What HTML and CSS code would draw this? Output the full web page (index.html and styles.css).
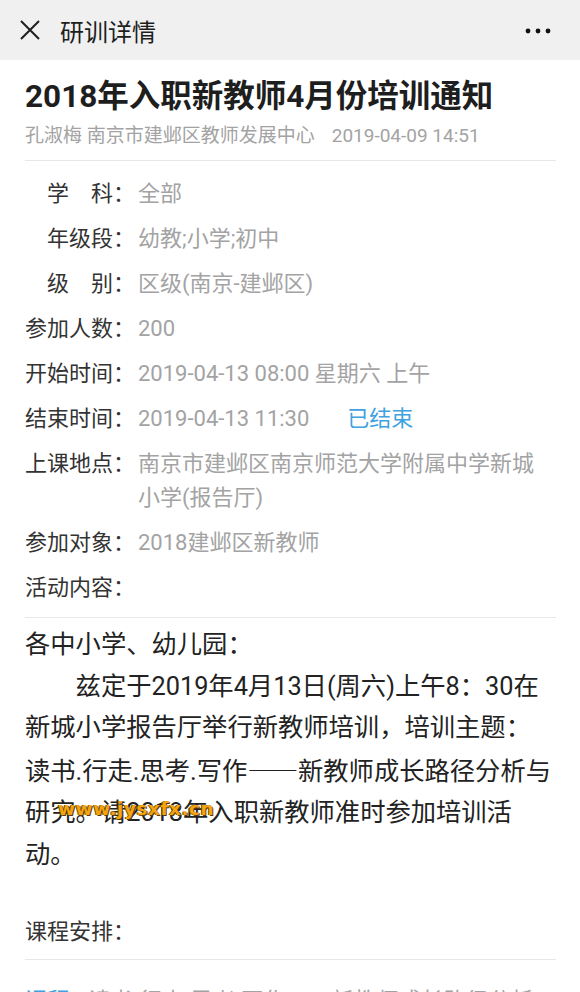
FILE: index.html
```html
<!DOCTYPE html>
<html lang="zh-CN">
<head>
    <meta charset="UTF-8">
    <meta name="viewport" content="width=device-width, initial-scale=1.0">
    <title>研训详情</title>
    <link rel="stylesheet" href="styles.css">
</head>
<body>
    <div class="topbar">
        <svg class="close-icon" width="20" height="20" viewBox="0 0 20 20">
            <path d="M1 1 L19 19 M19 1 L1 19" stroke="#1e1e1e" stroke-width="2" fill="none"/>
        </svg>
        <span class="topbar-title">研训详情</span>
        <svg class="more-icon" width="30" height="8" viewBox="0 0 30 8">
            <circle cx="5" cy="4" r="2.4" fill="#111"/>
            <circle cx="15" cy="4" r="2.4" fill="#111"/>
            <circle cx="25" cy="4" r="2.4" fill="#111"/>
        </svg>
    </div>

    <div class="container">
        <div class="heading">
            <h1>2018年入职新教师4月份培训通知</h1>
            <p class="meta">孔淑梅 南京市建邺区教师发展中心<span class="meta-date">2019-04-09 14:51</span></p>
        </div>

        <div class="details">
            <div class="row"><span class="label">学　科：</span><span class="value">全部</span></div>
            <div class="row"><span class="label">年级段：</span><span class="value">幼教;小学;初中</span></div>
            <div class="row"><span class="label">级　别：</span><span class="value">区级(南京-建邺区)</span></div>
            <div class="row"><span class="label">参加人数：</span><span class="value">200</span></div>
            <div class="row"><span class="label">开始时间：</span><span class="value">2019-04-13 08:00 星期六 上午</span></div>
            <div class="row"><span class="label">结束时间：</span><span class="value">2019-04-13 11:30<span class="status">已结束</span></span></div>
            <div class="row"><span class="label">上课地点：</span><span class="value">南京市建邺区南京师范大学附属中学新城小学(报告厅)</span></div>
            <div class="row"><span class="label">参加对象：</span><span class="value">2018建邺区新教师</span></div>
            <div class="row"><span class="label">活动内容：</span></div>
        </div>

        <div class="content">
            <p>各中小学、幼儿园：</p>
            <p class="indent">兹定于2019年4月13日(周六)上午8：30在新城小学报告厅举行新教师培训，培训主题：读书.行走.思考.写作<span class="dash">——</span>新教师成长路径分析与研究。请2018年入职新教师准时参加培训活动。</p>
            <span class="watermark">www.jysxfx.cn</span>
        </div>

        <div class="schedule">
            <p class="schedule-title">课程安排：</p>
        </div>

        <div class="course">
            <span class="course-no">课程1</span> 读书.行走.思考.写作<span class="dash">——</span>新教师成长路径分析与研究
        </div>
    </div>
</body>
</html>
```

FILE: styles.css
```css
body {
    margin: 0;
    background: #fff;
    font-family: Roboto, "Noto Sans CJK SC", sans-serif;
    color: #222;
}

.topbar {
    height: 60px;
    background: #f0f0f0;
    display: flex;
    align-items: center;
    padding: 0 27px 0 20px;
}

.close-icon {
    flex: none;
}

.topbar-title {
    margin-left: 20px;
    font-size: 24px;
    color: #1e1e1e;
    flex: 1;
}

.more-icon {
    margin-top: 2px;
}

.container {
    padding: 0 24px 0 25px;
}

.heading {
    padding-top: 17px;
    padding-bottom: 10px;
    border-bottom: 1px solid #e8e8e8;
}

h1 {
    font-size: 31.5px;
    line-height: 40px;
    margin: 0;
    color: #1e1e1e;
    font-weight: bold;
}

.meta {
    font-size: 19px;
    line-height: 28px;
    margin: 5px 0 0;
    color: #a3a3a3;
}

.meta-date {
    margin-left: 17px;
}

.details {
    padding: 16px 0 12px;
    border-bottom: 1px solid #e8e8e8;
}

.row {
    display: flex;
    font-size: 22px;
    line-height: 34px;
    margin-bottom: 11px;
    padding-right: 12px;
}

.row:last-child {
    margin-bottom: 0;
}

.label {
    flex: none;
    width: 110px;
    text-align: right;
    color: #333;
}

.value {
    margin-left: 3px;
    color: #a3a3a3;
}

.status {
    margin-left: 38px;
    color: #3fa2e0;
}

.content {
    position: relative;
    font-size: 25.3px;
    line-height: 41.6px;
    color: #222;
    padding-top: 6px;
    padding-right: 2px;
}

.content p {
    margin: 0;
}

.indent {
    text-indent: 2em;
}

.dash {
    font-family: "Noto Sans CJK SC", sans-serif;
}

.watermark {
    position: absolute;
    left: 33px;
    top: 170px;
    font-size: 18.5px;
    font-weight: bold;
    font-family: "DejaVu Sans", sans-serif;
    color: #f4a411;
    letter-spacing: 0.5px;
    text-shadow: 1px 1px 0 #5a3a00, -1px 0 0 #7a5000;
}

.schedule {
    padding-top: 39px;
    padding-bottom: 10px;
    border-bottom: 1px solid #e8e8e8;
}

.schedule-title {
    margin: 0;
    font-size: 22px;
    line-height: 34px;
    color: #333;
}

.course {
    padding-top: 22px;
    font-size: 22.5px;
    line-height: 34px;
    color: #a3a3a3;
}

.course-no {
    color: #3fa2e0;
}
```
